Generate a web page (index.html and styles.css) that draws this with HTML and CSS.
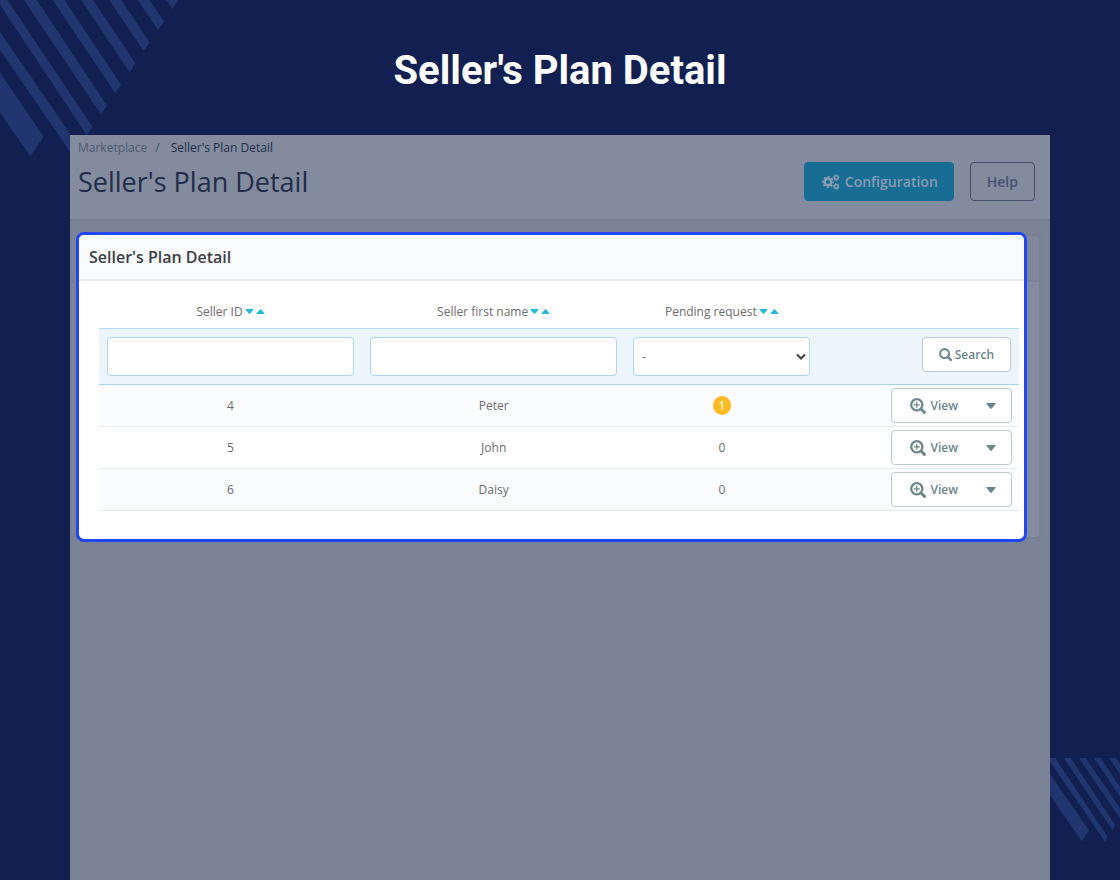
FILE: index.html
```html
<!DOCTYPE html>
<html lang="en">
<head>
  <meta charset="UTF-8">
  <meta name="viewport" content="width=device-width, initial-scale=1.0">
  <title>Seller's Plan Detail</title>
  <link rel="stylesheet" href="styles.css">
</head>
<body>
  <!-- shared icons -->
  <svg class="sprite" aria-hidden="true">
    <symbol id="icon-cogs" viewBox="0 0 18 16">
      <circle cx="6" cy="8" r="3.4" fill="none" stroke="currentColor" stroke-width="2.6"/>
      <circle cx="6" cy="8" r="5.1" fill="none" stroke="currentColor" stroke-width="1.8" stroke-dasharray="2 2.005" stroke-dashoffset="1"/>
      <circle cx="14.2" cy="3.6" r="1.9" fill="none" stroke="currentColor" stroke-width="1.6"/>
      <circle cx="14.2" cy="3.6" r="2.9" fill="none" stroke="currentColor" stroke-width="1" stroke-dasharray="1.5 1.537" stroke-dashoffset=".75"/>
      <circle cx="14.2" cy="12.4" r="1.9" fill="none" stroke="currentColor" stroke-width="1.6"/>
      <circle cx="14.2" cy="12.4" r="2.9" fill="none" stroke="currentColor" stroke-width="1" stroke-dasharray="1.5 1.537" stroke-dashoffset=".75"/>
    </symbol>
    <symbol id="icon-search" viewBox="0 0 14 14">
      <circle cx="6" cy="6" r="4.8" fill="none" stroke="currentColor" stroke-width="2.2"/>
      <path d="M9.5 9.5l3.2 3.2" fill="none" stroke="currentColor" stroke-width="2.6" stroke-linecap="round"/>
    </symbol>
    <symbol id="icon-zoom" viewBox="0 0 16 16">
      <circle cx="6.8" cy="6.8" r="5.6" fill="none" stroke="currentColor" stroke-width="2.3"/>
      <path d="M6.8 3.8v6M3.8 6.8h6" fill="none" stroke="currentColor" stroke-width="1.3"/>
      <path d="M11 11l3.4 3.4" fill="none" stroke="currentColor" stroke-width="2.9" stroke-linecap="round"/>
    </symbol>
    <symbol id="icon-down" viewBox="0 0 10 6">
      <path d="M.8 0h8.4q.9 0 .4.8L5.8 5.4q-.8.8-1.6 0L.4.8Q-.1 0 .8 0z" fill="currentColor"/>
    </symbol>
    <symbol id="icon-up" viewBox="0 0 10 6">
      <path d="M.8 6h8.4q.9 0 .4-.8L5.8.6q-.8-.8-1.6 0L.4 5.2Q-.1 6 .8 6z" fill="currentColor"/>
    </symbol>
  </svg>

  <div class="stage">
    <svg class="stripes stripes-top" viewBox="0 0 600 510" aria-hidden="true">
      <path d="M0 218L131 410 91 469 0 338z"/>
      <path d="M0 95L240 445 240 498 0 150z"/>
      <path d="M0 0H22L277 380 260 405 0 15z"/>
      <path d="M72 0H110L321 317 303 343z"/>
      <path d="M158 0H194L363 254 346 280z"/>
      <path d="M243 0H279L406 190 389 217z"/>
      <path d="M328 0H364L449 127 431 153z"/>
      <path d="M413 0H449L492 64 474 90z"/>
      <path d="M498 0H535L517 27z"/>
    </svg>
    <svg class="stripes stripes-bottom" viewBox="0 0 210 252" aria-hidden="true">
      <path d="M0 48L117 217 95 250 0 111z"/>
      <path d="M0 0H16L173 236 164 250 0 11z"/>
      <path d="M41 0H62L196 202 187 216z"/>
      <path d="M87 0H107L210 151V181z"/>
      <path d="M132 0H152L210 86V116z"/>
      <path d="M177 0H197L210 18V49z"/>
    </svg>

    <h1 class="stage-title">Seller's Plan Detail</h1>

    <main class="window">
      <header class="page-head">
        <div class="page-head-text">
          <nav class="breadcrumb" aria-label="Breadcrumb">
            <a href="#">Marketplace</a>
            <span class="slash">/</span>
            <span class="current">Seller's Plan Detail</span>
          </nav>
          <h2 class="page-title">Seller's Plan Detail</h2>
        </div>
        <div class="page-actions">
          <button type="button" class="btn-primary">
            <svg class="icon-cogs"><use href="#icon-cogs"/></svg>
            Configuration
          </button>
          <button type="button" class="btn-outline">Help</button>
        </div>
      </header>

      <div class="panel-wrap">
        <div class="panel-back"></div>
        <section class="panel">
          <h3 class="panel-title">Seller's Plan Detail</h3>
          <div class="panel-body">
            <table class="grid">
              <colgroup>
                <col class="col-id">
                <col class="col-name">
                <col class="col-pending">
                <col class="col-actions">
              </colgroup>
              <thead>
                <tr>
                  <th><span class="sort">Seller ID <a href="#" aria-label="Sort descending"><svg><use href="#icon-down"/></svg></a><a href="#" aria-label="Sort ascending"><svg><use href="#icon-up"/></svg></a></span></th>
                  <th><span class="sort">Seller first name <a href="#" aria-label="Sort descending"><svg><use href="#icon-down"/></svg></a><a href="#" aria-label="Sort ascending"><svg><use href="#icon-up"/></svg></a></span></th>
                  <th><span class="sort">Pending request <a href="#" aria-label="Sort descending"><svg><use href="#icon-down"/></svg></a><a href="#" aria-label="Sort ascending"><svg><use href="#icon-up"/></svg></a></span></th>
                  <th></th>
                </tr>
                <tr class="filters">
                  <td><input type="text" class="field" aria-label="Seller ID"></td>
                  <td><input type="text" class="field" aria-label="Seller first name"></td>
                  <td>
                    <div class="select-wrap">
                      <select class="field" aria-label="Pending request"><option>-</option></select>
                      <svg class="chevron" viewBox="0 0 10 8"><path d="M1 1.5l4 4 4-4" fill="none" stroke="currentColor" stroke-width="2.2"/></svg>
                    </div>
                  </td>
                  <td class="actions">
                    <button type="button" class="btn-search"><svg><use href="#icon-search"/></svg>Search</button>
                  </td>
                </tr>
              </thead>
              <tbody>
                <tr>
                  <td>4</td>
                  <td>Peter</td>
                  <td><span class="badge">1</span></td>
                  <td class="actions">
                    <div class="btn-group">
                      <button type="button" class="btn-view"><svg><use href="#icon-zoom"/></svg>View</button>
                      <button type="button" class="btn-caret" aria-label="More actions"><svg><use href="#icon-down"/></svg></button>
                    </div>
                  </td>
                </tr>
                <tr>
                  <td>5</td>
                  <td>John</td>
                  <td>0</td>
                  <td class="actions">
                    <div class="btn-group">
                      <button type="button" class="btn-view"><svg><use href="#icon-zoom"/></svg>View</button>
                      <button type="button" class="btn-caret" aria-label="More actions"><svg><use href="#icon-down"/></svg></button>
                    </div>
                  </td>
                </tr>
                <tr>
                  <td>6</td>
                  <td>Daisy</td>
                  <td>0</td>
                  <td class="actions">
                    <div class="btn-group">
                      <button type="button" class="btn-view"><svg><use href="#icon-zoom"/></svg>View</button>
                      <button type="button" class="btn-caret" aria-label="More actions"><svg><use href="#icon-down"/></svg></button>
                    </div>
                  </td>
                </tr>
              </tbody>
            </table>
          </div>
        </section>
      </div>
    </main>
  </div>
</body>
</html>
```
FILE: styles.css
```css
* {
  box-sizing: border-box;
}
body {
  margin: 0;
  background-color: #112050;
  font-family: "Open Sans", "Liberation Sans", sans-serif;
  font-size: 12px;
  line-height: 16px;
  color: #6c6c6c;
}
button,
input,
select {
  font: inherit;
}
button {
  cursor: pointer;
}
a {
  color: inherit;
  text-decoration: none;
}
.sprite {
  display: none;
}

/* backdrop */
.stage {
  position: relative;
  display: flex;
  flex-direction: column;
  min-height: 100vh;
  padding: 0 70px;
  overflow: hidden;
}
.stripes {
  position: absolute;
  fill: #21366f;
}
.stripes-top {
  top: 0;
  left: 0;
  width: 200px;
  height: 170px;
}
.stripes-bottom {
  right: 0;
  bottom: 38px;
  width: 70px;
  height: 84px;
}
.stage-title {
  position: relative;
  margin: 0;
  padding: 47px 0 40px;
  font-family: Roboto, "Liberation Sans", sans-serif;
  font-size: 40px;
  font-weight: 700;
  line-height: 48px;
  text-align: center;
  color: #ffffff;
}
.window {
  position: relative;
  flex: 1;
  background-color: #7b8396;
}

/* page header */
.page-head {
  display: flex;
  justify-content: space-between;
  align-items: flex-end;
  padding: 4px 15px 18px 8px;
  background-color: #838b9e;
  border-bottom: 1px solid #757d90;
}
.breadcrumb {
  display: flex;
  line-height: 18px;
  color: #4f5a70;
}
.breadcrumb .slash {
  margin: 0 11px 0 8px;
  color: #3f5752;
}
.breadcrumb .current {
  color: #222e4a;
}
.page-title {
  margin: 8px 0 2px;
  font-size: 27px;
  font-weight: 400;
  line-height: 34px;
  color: #222d49;
}
.page-actions {
  display: flex;
  gap: 16px;
}
.btn-primary,
.btn-outline {
  display: flex;
  align-items: center;
  height: 39px;
  padding: 0 16px;
  border: 1px solid #43536f;
  border-radius: 4px;
  background: none;
  font-size: 14px;
  font-weight: 600;
  color: #43536f;
}
.btn-primary {
  gap: 5px;
  padding: 0 15px 0 17px;
  border-color: #176d93;
  background-color: #176d93;
  color: #8a9bb2;
}
.icon-cogs {
  width: 18px;
  height: 16px;
}

/* highlighted panel */
.panel-wrap {
  position: relative;
  padding: 12px 23px 0 6px;
}
.panel-back {
  position: absolute;
  top: 15px;
  right: 10px;
  bottom: 4px;
  left: 8px;
  border: 1px solid #788195;
  border-radius: 4px;
  background: linear-gradient(#81879b 44px, #788195 44px, #788195 46px, #838b9e 46px);
  box-shadow: 0 0 3px #737c90;
}
.panel {
  position: relative;
  border: 3px solid #2146f3;
  border-radius: 8px;
  background-color: #ffffff;
  overflow: hidden;
}
.panel-title {
  margin: 0;
  padding: 12px 10px;
  border-bottom: 2px solid #e9edf1;
  background-color: #fafbfd;
  font-size: 16px;
  font-weight: 600;
  line-height: 20px;
  color: #3b4045;
}
.panel-body {
  padding: 0 5px 28px 20px;
}

/* table */
.grid {
  width: 100%;
  table-layout: fixed;
  border-collapse: separate;
  border-spacing: 0;
  text-align: center;
}
.col-id,
.col-name {
  width: 28.6%;
}
.col-pending {
  width: 21%;
}
.grid th {
  padding: 23px 8px 8px;
  font-weight: 400;
}
.sort {
  display: inline-flex;
  align-items: center;
}
.sort a {
  display: flex;
  margin-left: 2px;
  padding-bottom: 1px;
  color: #25b9d7;
}
.sort svg {
  width: 9px;
  height: 5px;
}
.grid td {
  padding: 3px 8px;
  border-bottom: 1px solid #e8ecef;
}
.grid tbody tr:nth-child(odd) {
  background-color: #fbfcfd;
}
.grid .filters {
  background-color: #ecf5fb;
}
.grid .filters td {
  padding: 8px;
  border-top: 1px solid #b3dbf0;
  border-bottom-color: #a6d6ee;
  vertical-align: top;
}
.field {
  display: block;
  width: 100%;
  height: 39px;
  padding: 0 8px;
  border: 1px solid #a9d7f0;
  border-radius: 4px;
  background-color: #ffffff;
  color: #6c6c6c;
}
.select-wrap {
  position: relative;
}
select.field {
  appearance: none;
}
.chevron {
  position: absolute;
  top: 16px;
  right: 4px;
  width: 10px;
  height: 8px;
  color: #444444;
  pointer-events: none;
}
.badge {
  display: inline-block;
  width: 18px;
  height: 19px;
  border-radius: 50%;
  background-color: #fbbb22;
  line-height: 19px;
  color: #ffffff;
}

/* row buttons */
.grid .actions {
  padding-right: 7px;
  text-align: right;
}
.btn-search,
.btn-group {
  display: inline-flex;
  align-items: center;
  height: 35px;
  border: 1px solid #bbcdd2;
  border-radius: 4px;
  background-color: #ffffff;
  font-weight: 600;
  color: #6c868e;
  vertical-align: top;
}
.btn-search {
  gap: 3px;
  padding: 0 16px;
}
.btn-search svg {
  width: 13px;
  height: 13px;
}
.btn-view,
.btn-caret {
  display: flex;
  align-items: center;
  height: 100%;
  border: 0;
  background: none;
  color: inherit;
}
.btn-view {
  gap: 4px;
  padding: 0 18px;
}
.btn-view svg {
  width: 16px;
  height: 16px;
}
.btn-caret {
  padding: 0 15px 0 10px;
}
.btn-caret svg {
  width: 10px;
  height: 6px;
}
```
